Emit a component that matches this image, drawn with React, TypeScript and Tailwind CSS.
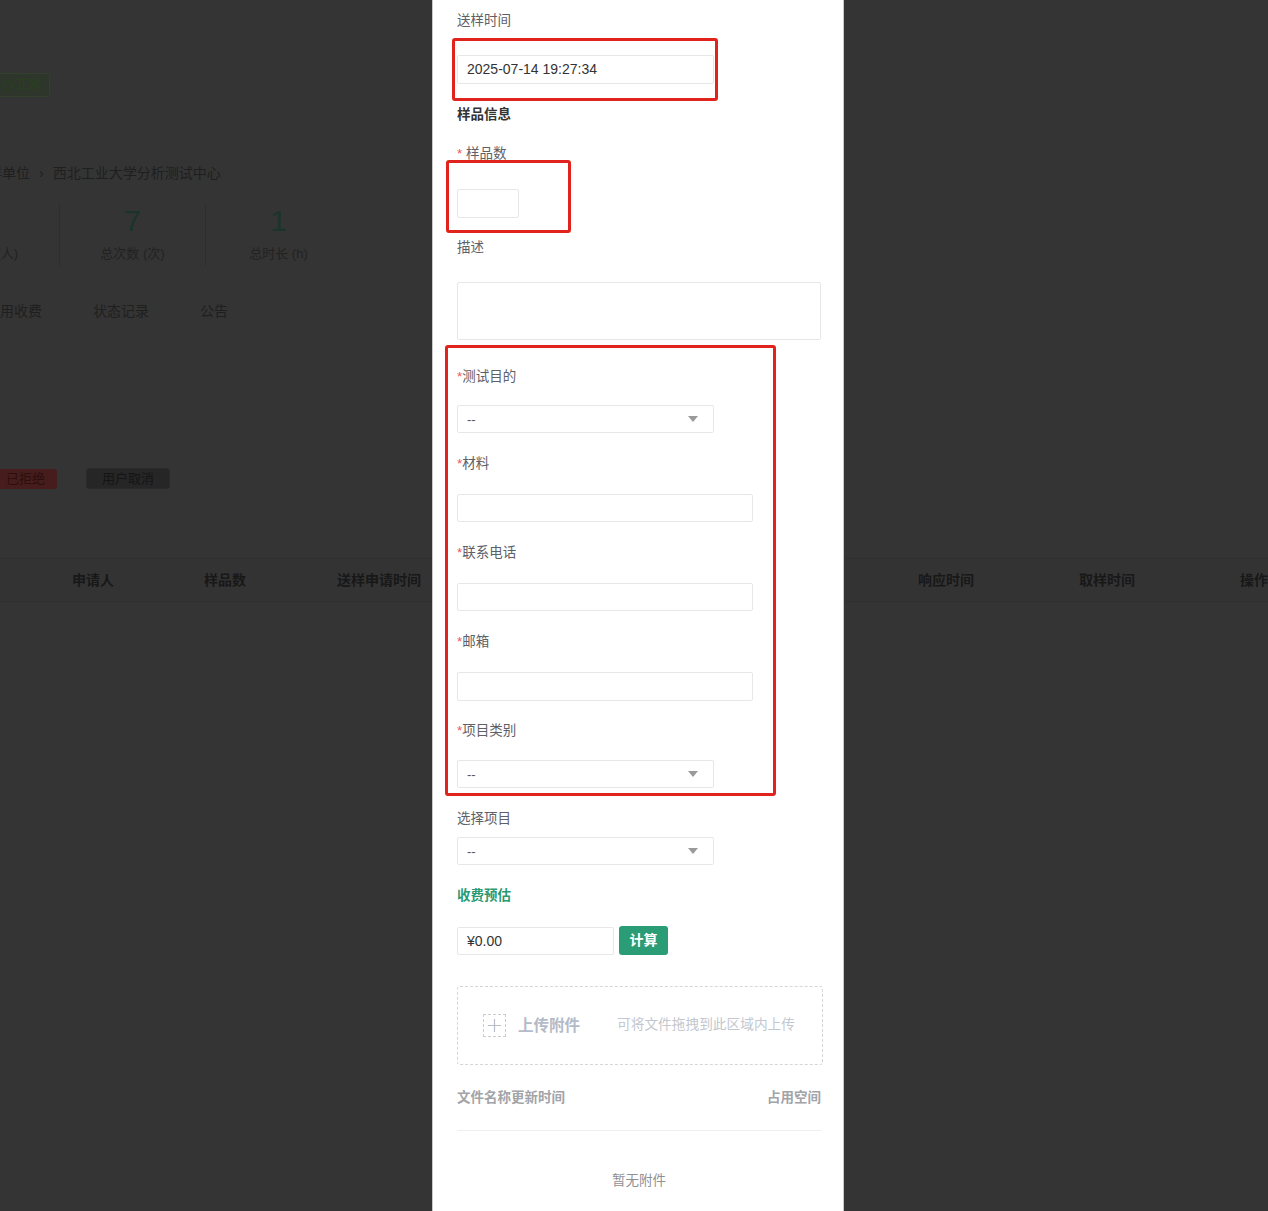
const font = "font-['Liberation_Sans','Noto_Sans_CJK_SC',sans-serif]";

const Caret = () => (
  <svg width="10" height="6" viewBox="0 0 10 6">
    <path d="M0 0h10L5 6z" fill="#9a9a9a" />
  </svg>
);

const Label = ({ text, required, className = "" }: { text: string; required?: boolean; className?: string }) => (
  <div className={`text-[13.5px] leading-5 text-[#5e6066] ${className}`}>
    {required && <span className="text-[#f25252]">*</span>}
    {text}
  </div>
);

const Input = ({ className = "", children }: { className?: string; children?: React.ReactNode }) => (
  <div
    className={`flex items-center rounded-[2px] border border-[#e6e7ea] bg-white px-[9px] text-[14px] text-[#333] ${className}`}
  >
    {children}
  </div>
);

const Select = ({ className = "" }: { className?: string }) => (
  <div
    className={`flex h-[28px] w-[257px] items-center justify-between rounded-[2px] border border-[#e6e7ea] bg-white pl-[9px] pr-[15px] text-[13px] text-[#555] ${className}`}
  >
    <span className="pt-[2px]">--</span>
    <Caret />
  </div>
);

const Background = () => (
  <div className="w-full">
    <div className="pt-[73px]">
      <div className="-ml-[4px] flex h-[24px] w-[54px] items-center gap-[4px] rounded-[3px] border border-[#33402e] bg-[#2e362b] pl-[6px] text-[12px] text-[#27421d]">
        <span className="inline-block h-[10px] w-[10px] rounded-full border border-[#27421d]" />
        正常
      </div>
    </div>

    <div className="mt-[66px] flex text-[14px] leading-5 text-[#1f1f1f]">
      <span className="-ml-[26px]">收样单位</span>
      <span className="mx-[9px]">›</span>
      <span>西北工业大学分析测试中心</span>
    </div>

    <div className="mt-[21px] -ml-[87px] flex">
      {[
        ["3", "总人数 (人)"],
        ["7", "总次数 (次)"],
        ["1", "总时长 (h)"],
      ].map(([n, l], i) => (
        <div
          key={l}
          className={`flex h-[62px] w-[146px] flex-col items-center ${i > 0 ? "border-l border-[#2d2d2d]" : ""}`}
        >
          <div className="text-[30px] font-light leading-[34px] text-[#1a342b]">{n}</div>
          <div className="mt-[6px] text-[13px] leading-5 text-[#222]">{l}</div>
        </div>
      ))}
    </div>

    <div className="mt-[35px] -ml-[14px] flex gap-[51px] text-[14px] leading-5 text-[#1f1f1f]">
      <span>使用收费</span>
      <span>状态记录</span>
      <span>公告</span>
    </div>

    <div className="mt-[147px] flex items-center gap-[29px]">
      <div className="-ml-[6px] flex h-[20px] items-center rounded-[3px] bg-[#461c1c] px-[12px] text-[13px] text-[#2c0e0e]">
        已拒绝
      </div>
      <div className="flex h-[21px] items-center rounded-[3px] border border-[#2a2a2a] bg-[#262626] px-[15px] text-[13px] text-[#151515]">
        用户取消
      </div>
    </div>

    <div className="mt-[69px] flex h-[44px] items-center border-y border-[#303030] bg-[#333333] pl-[72px] text-[14px] font-bold text-[#181818]">
      <div className="w-[132px]">申请人</div>
      <div className="w-[133px]">样品数</div>
      <div className="w-[581px]">送样申请时间</div>
      <div className="w-[161px]">响应时间</div>
      <div className="w-[161px]">取样时间</div>
      <div className="whitespace-nowrap">操作</div>
    </div>
  </div>
);

export default function App() {
  return (
    <div className={`relative h-[1211px] w-[1268px] overflow-hidden bg-[#343434] ${font}`}>
      <Background />

      <div className="absolute left-[432px] top-0 h-full w-[412px] border-x border-[#c9c9c9] bg-white pl-6 pr-[22px] pt-[11px]">
        <Label text="送样时间" />
        <Input className="mt-[24px] h-[29px] w-[257px]">2025-07-14 19:27:34</Input>

        <div className="mt-[21px] text-[13.5px] font-bold leading-5 text-[#333]">样品信息</div>

        <div className="mt-[19px] text-[13.5px] leading-5 text-[#5e6066]">
          <span className="text-[#f25252]">*</span> 样品数
        </div>
        <Input className="mt-[25px] h-[29px] w-[62px]" />

        <Label text="描述" className="mt-[20px]" />
        <Input className="mt-[24px] h-[58px] w-full" />

        <Label text="测试目的" required className="mt-[27px]" />
        <Select className="mt-[18px]" />

        <Label text="材料" required className="mt-[21px]" />
        <Input className="mt-[20px] h-[28px] w-[296px]" />

        <Label text="联系电话" required className="mt-[21px]" />
        <Input className="mt-[20px] h-[28px] w-[296px]" />

        <Label text="邮箱" required className="mt-[21px]" />
        <Input className="mt-[20px] h-[29px] w-[296px]" />

        <Label text="项目类别" required className="mt-[20px]" />
        <Select className="mt-[19px]" />

        <Label text="选择项目" className="mt-[21px]" />
        <Select className="mt-[8px]" />

        <div className="mt-[21px] text-[13.5px] font-bold leading-5 text-[#2a9a73]">收费预估</div>

        <div className="mt-[20px] flex items-start gap-[5px]">
          <Input className="mt-[1px] h-[28px] w-[157px] bg-[#f5f6f8]">¥0.00</Input>
          <button className="h-[29px] w-[49px] rounded-[3px] bg-[#2a9d76] text-[14px] font-bold text-white">
            计算
          </button>
        </div>

        <div className="-mr-[2px] mt-[31px] flex h-[79px] items-center rounded-[3px] border border-dashed border-[#d4d6da] pl-[25px]">
          <div className="flex h-[23px] w-[23px] items-center justify-center border border-dashed border-[#c9ccd2]">
            <svg width="15" height="15" viewBox="0 0 15 15">
              <path d="M7.5 1v13M1 7.5h13" stroke="#b8bdc7" strokeWidth="1.2" />
            </svg>
          </div>
          <span className="ml-[12px] text-[15.5px] font-bold text-[#b3bac8]">上传附件</span>
          <span className="ml-[37px] text-[13.7px] text-[#c3c7cf]">可将文件拖拽到此区域内上传</span>
        </div>

        <div className="mt-[23px] flex justify-between text-[13.5px] font-bold leading-5 text-[#a2a4a8]">
          <span>文件名称更新时间</span>
          <span>占用空间</span>
        </div>
        <div className="mt-[22px] h-px bg-[#efefef]" />

        <div className="mt-[40px] text-center text-[13.5px] leading-5 text-[#8e9096]">暂无附件</div>

        <div className="absolute left-[19px] top-[38px] h-[63px] w-[266px] rounded-[3px] border-[3px] border-[#e0231d]" />
        <div className="absolute left-[13px] top-[160px] h-[73px] w-[125px] rounded-[3px] border-[3px] border-[#e0231d]" />
        <div className="absolute left-[12px] top-[345px] h-[451px] w-[331px] rounded-[3px] border-[3px] border-[#e0231d]" />
      </div>
    </div>
  );
}
